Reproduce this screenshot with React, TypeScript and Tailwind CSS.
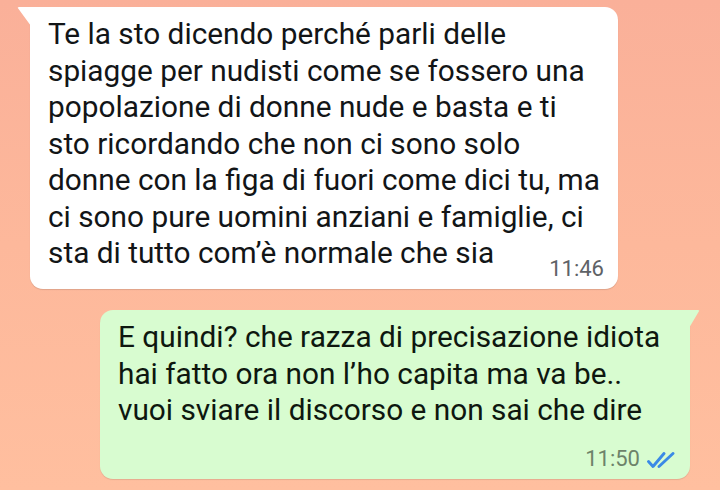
import React from 'react';

const incoming = [
  'Te la sto dicendo perché parli delle',
  'spiagge per nudisti come se fossero una',
  'popolazione di donne nude e basta e ti',
  'sto ricordando che non ci sono solo',
  'donne con la figa di fuori come dici tu, ma',
  'ci sono pure uomini anziani e famiglie, ci',
];

const outgoing = [
  'E quindi? che razza di precisazione idiota',
  'hai fatto ora non l’ho capita ma va be..',
  'vuoi sviare il discorso e non sai che dire',
];

function Ticks() {
  return (
    <svg width="28" height="17" viewBox="0 0 28 17" fill="none" className="ml-[7px] mb-[3px]">
      <path d="M1.5 9.5 L6 14.5 L17 1.5" stroke="#3a8ae6" strokeWidth="2.9" strokeLinecap="round" strokeLinejoin="round" />
      <path d="M12 14.5 L26 1.5" stroke="#3a8ae6" strokeWidth="2.9" strokeLinecap="round" />
    </svg>
  );
}

export default function App() {
  return (
    <div
      className="w-[720px] h-[490px] overflow-hidden bg-[linear-gradient(180deg,#fab099_0%,#fdb89b_50%,#ffbf9f_100%)] pt-[7px]"
      style={{ fontFamily: 'Roboto, "Noto Sans", sans-serif' }}
    >
      {/* incoming */}
      <div className="relative ml-[30px] w-[588px] bg-white rounded-[13px] rounded-tl-none pt-[9px] pl-[18px] pr-[14px] pb-[7px] shadow-[0_1px_1px_rgba(0,0,0,0.12)]">
        <svg className="absolute left-[-13px] top-0" width="14" height="20" viewBox="0 0 14 20">
          <path d="M14 0 L2 0 Q0 0 1.2 1.6 L14 19 Z" fill="#ffffff" />
        </svg>
        <div className="text-[29.8px] leading-[36.5px] text-[#121517] whitespace-nowrap">
          {incoming.map((l) => (
            <div key={l}>{l}</div>
          ))}
          <div className="flex items-start justify-between">
            <span>sta di tutto com’è normale che sia</span>
            <span className="mt-[21px] text-[22px] leading-[26px] text-[#5e6266]">11:46</span>
          </div>
        </div>
      </div>

      {/* outgoing */}
      <div className="relative ml-[100px] mt-[21px] w-[590px] bg-[#d8fcd0] rounded-[13px] rounded-tr-none pt-[9px] pl-[18px] pr-[15px] pb-[7px] shadow-[0_1px_1px_rgba(0,0,0,0.1)]">
        <svg className="absolute right-[-10px] top-0" width="11" height="19" viewBox="0 0 11 19">
          <path d="M0 0 L9 0 Q11 0 9.8 1.6 L0 18 Z" fill="#d8fcd0" />
        </svg>
        <div className="text-[29.8px] leading-[36.5px] text-[#0e170f] whitespace-nowrap">
          {outgoing.map((l) => (
            <div key={l}>{l}</div>
          ))}
        </div>
        <div className="mt-[17px] flex items-end justify-end">
          <span className="text-[22px] leading-[26px] text-[#6d8369]">11:50</span>
          <Ticks />
        </div>
      </div>
    </div>
  );
}
